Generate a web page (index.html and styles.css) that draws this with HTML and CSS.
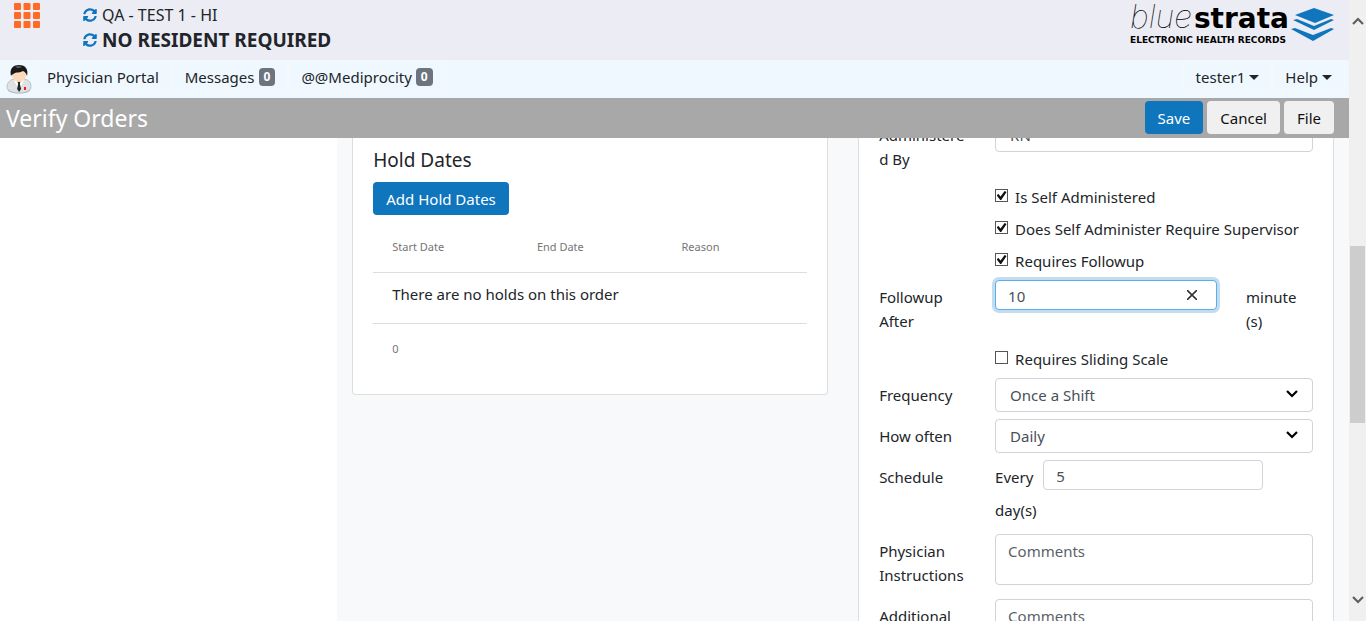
FILE: index.html
```html
<!DOCTYPE html>
<html lang="en">
<head>
<meta charset="utf-8">
<title>Verify Orders</title>
<link rel="stylesheet" href="styles.css">
</head>
<body>
<svg class="defs" aria-hidden="true">
  <symbol id="sync" viewBox="0 0 512 512"><path d="M370.7 133.3C339.5 104 298.900 88 255.800 88c-77.500.100-144.300 53.200-162.800 126.900-1.300 5.400-6.100 9.100-11.700 9.100H24.100c-7.500 0-13.200-6.800-11.800-14.200C33.900 94.900 134.800 8 256 8c66.400 0 126.800 26.100 171.300 68.700L463 41c15.100-15.100 41-4.400 41 17v134c0 13.300-10.700 24-24 24H346c-21.400 0-32.100-25.900-17-41l41.700-41.700zM32 296h134c21.400 0 32.100 25.900 17 41l-41.800 41.800c31.300 29.300 71.800 45.300 114.900 45.200 77.400-.100 144.300-53.100 162.800-126.800 1.300-5.400 6.100-9.200 11.700-9.200h57.300c7.500 0 13.200 6.800 11.800 14.200C478.100 417.100 377.200 504 256 504c-66.400 0-126.800-26.100-171.300-68.700L49 471c-15.100 15.100-41 4.400-41-17V320c0-13.300 10.700-24 24-24z"/></symbol>
  <symbol id="chevron" viewBox="0 0 12 8"><path d="M1 1l5 5 5-5" fill="none" stroke="currentColor" stroke-width="2.200"/></symbol>
</svg>
<div class="app">
  <div class="main">
    <header class="banner">
      <button class="apps" aria-label="Applications">
        <svg viewBox="0 0 26 25" fill="#ff6a26"><rect width="7" height="7" rx="1"/><rect x="9.500" width="7" height="7" rx="1"/><rect x="19" width="7" height="7" rx="1"/><rect y="9" width="7" height="7" rx="1"/><rect x="9.500" y="9" width="7" height="7" rx="1"/><rect x="19" y="9" width="7" height="7" rx="1"/><rect y="18" width="7" height="7" rx="1"/><rect x="9.500" y="18" width="7" height="7" rx="1"/><rect x="19" y="18" width="7" height="7" rx="1"/></svg>
      </button>
      <div class="context">
        <div class="facility"><svg class="sync"><use href="#sync"/></svg>QA - TEST 1 - HI</div>
        <div class="resident"><svg class="sync"><use href="#sync"/></svg>NO RESIDENT REQUIRED</div>
      </div>
      <div class="logo">
        <div class="wordmark">
          <div class="brand"><span class="thin">blue</span><span class="heavy">strata</span></div>
          <div class="tagline">ELECTRONIC HEALTH RECORDS</div>
        </div>
        <svg class="layers" viewBox="0 0 44 33" fill="#0f75bd"><path d="M23 0L43 7 24 15 4 7z"/><path d="M2 12l4-1 17 7 17-7 3 1-20 10z"/><path d="M0 21l4-1 18 7 18-7 3 1-21 12z"/></svg>
      </div>
    </header>
    <nav class="nav">
      <svg class="avatar" viewBox="0 0 26 30">
        <ellipse cx="13" cy="26" rx="11.500" ry="3.500" fill="#c3c6cb"/>
        <path d="M1 23c0-5 4-8 8-8h8c5 0 8 3 8 8 0 4-6 6-12 6S1 27 1 23z" fill="#dfe1e5" stroke="#9fa4ac" stroke-width=".6"/>
        <path d="M8 16l5 11 5-11z" fill="#fff"/><path d="M11.500 17h3l-.6 3 1.200 5-2 3-2-3 1-5z" fill="#23262b"/>
        <ellipse cx="13" cy="11" rx="7" ry="7" fill="#fbd9bb"/>
        <path d="M5 12C3 4 8 1 13 1s10 3 8 11c-1-3-2-4-4-5-3 2-6 1-8 2-1 1-3 1-4 3z" fill="#191919"/>
        <path d="M9 3c2-1 5-1 7 0-2 1-5 1-7 0z" fill="#777"/>
        <path d="M18 23h2v3h-2z" fill="#e0222c"/>
      </svg>
      <a class="nav-item" href="#">Physician Portal</a>
      <a class="nav-item" href="#">Messages <span class="badge">0</span></a>
      <a class="nav-item" href="#">@@Mediprocity <span class="badge">0</span></a>
      <button class="nav-item user">tester1<span class="caret"></span></button>
      <button class="nav-item">Help<span class="caret"></span></button>
    </nav>
    <div class="titlebar">
      <h1>Verify Orders</h1>
      <button class="btn primary">Save</button>
      <button class="btn light">Cancel</button>
      <button class="btn light">File</button>
    </div>
    <div class="content">
      <div class="side"></div>
      <div class="panels">
        <section class="card holds">
          <h2>Hold Dates</h2>
          <button class="btn primary">Add Hold Dates</button>
          <table>
            <thead><tr><th>Start Date</th><th>End Date</th><th>Reason</th></tr></thead>
            <tbody><tr><td colspan="3">There are no holds on this order</td></tr></tbody>
            <tfoot><tr><td colspan="3">0</td></tr></tfoot>
          </table>
        </section>
        <form class="card order">
          <div class="row">
            <label for="admin">Administered By</label>
            <div class="field"><div class="select"><select id="admin"><option>RN</option></select><svg><use href="#chevron"/></svg></div></div>
          </div>
          <div class="row">
            <div class="field checks">
              <label class="check"><input type="checkbox" checked>Is Self Administered</label>
              <label class="check"><input type="checkbox" checked>Does Self Administer Require Supervisor</label>
              <label class="check"><input type="checkbox" checked>Requires Followup</label>
            </div>
          </div>
          <div class="row">
            <label for="after">Followup After</label>
            <div class="field followup">
              <div class="clearable"><input class="text focused" id="after" type="text" value="10"><button type="button" aria-label="Clear"><svg viewBox="0 0 10 10"><path d="M0 0l10 10M10 0L0 10" stroke="#333" stroke-width="1.600"/></svg></button></div>
              <span class="unit">minute (s)</span>
            </div>
          </div>
          <div class="row">
            <div class="field checks"><label class="check"><input type="checkbox">Requires Sliding Scale</label></div>
          </div>
          <div class="row">
            <label for="freq">Frequency</label>
            <div class="field"><div class="select"><select id="freq"><option>Once a Shift</option></select><svg><use href="#chevron"/></svg></div></div>
          </div>
          <div class="row">
            <label for="often">How often</label>
            <div class="field"><div class="select"><select id="often"><option>Daily</option></select><svg><use href="#chevron"/></svg></div></div>
          </div>
          <div class="row">
            <label for="every">Schedule</label>
            <div class="field schedule"><span>Every</span><input class="text" id="every" type="text" value="5"><span class="days">day(s)</span></div>
          </div>
          <div class="row">
            <label for="phys">Physician Instructions</label>
            <div class="field"><textarea id="phys" placeholder="Comments"></textarea></div>
          </div>
          <div class="row">
            <label for="addl">Additional Instructions</label>
            <div class="field"><textarea id="addl" placeholder="Comments"></textarea></div>
          </div>
        </form>
      </div>
    </div>
  </div>
  <div class="scrollbar">
    <button class="up" aria-label="Scroll up"><svg><use href="#chevron"/></svg></button>
    <div class="before"></div><div class="thumb"></div><div class="after"></div>
    <button aria-label="Scroll down"><svg><use href="#chevron"/></svg></button>
  </div>
</div>
</body>
</html>
```

FILE: styles.css
```css
* { box-sizing: border-box; }
body { margin: 0; color: #212529; }
body, button, input, select, textarea { font-family: "Noto Sans", "Open Sans", sans-serif; font-size: 15px; line-height: 24px; }
button { margin: 0; padding: 0; border: 0; background: none; color: inherit; }
a { color: inherit; text-decoration: none; }
h1, h2 { margin: 0; font-weight: 400; }
.defs { display: none; }

.app { display: flex; height: 100vh; overflow: hidden; }
.main { flex: 1; min-width: 0; display: flex; flex-direction: column; }

.banner { display: flex; align-items: flex-start; flex: none; height: 60px; padding: 3px 14px 0; background: #ececf4; }
.apps { width: 26px; height: 25px; }
.apps svg { display: block; width: 26px; height: 25px; }
.context { margin-left: 43px; flex: 1; }
.facility, .resident { display: flex; align-items: center; gap: 5px; }
.facility { font-size: 16px; }
.resident { font-size: 19px; font-weight: 700; line-height: 26px; }
.sync { width: 14px; height: 14px; fill: #0f75bd; }
.logo { display: flex; align-items: flex-start; gap: 2px; color: #000; }
.brand { display: flex; align-items: baseline; justify-content: flex-end; font-size: 28px; line-height: 28px; }
.thin { padding-right: 2px; font-family: Inter, Lato, sans-serif; font-size: 32px; font-weight: 100; font-style: italic; }
.heavy { font-family: "DejaVu Sans", sans-serif; font-weight: 700; }
.tagline { margin-top: 2px; font-family: "DejaVu Sans", sans-serif; font-size: 9px; font-weight: 700; line-height: 10px; }
.layers { width: 44px; height: 33px; margin-top: 5px; }

.nav { display: flex; align-items: flex-start; flex: none; height: 38px; padding: 1px 4px 0 6px; background: #f0f8ff; }
.avatar { width: 26px; height: 30px; margin: 3px 2px 0 0; }
.nav-item { display: flex; align-items: center; gap: 4px; height: 32px; padding: 0 12px; border: 1px solid #f5f9fd; border-radius: 4px; }
.user { margin-left: auto; }
.badge { padding: 0 5px; border-radius: 4px; background: #6c757d; color: #fff; font-size: 12px; font-weight: 700; line-height: 18px; }
.caret { border: 5px solid transparent; border-top-color: #212529; border-bottom: 0; }

.titlebar { display: flex; align-items: center; flex: none; gap: 4px; height: 40px; padding: 0 15px 1px 6px; background: #a8a8a8; }
.titlebar h1 { flex: 1; color: #fff; font-size: 23px; line-height: 32px; }
.btn { height: 33px; padding: 0 13px; border-radius: 4px; }
.primary { background: #0f75bd; color: #fff; }
.light { background: #f0f0f0; color: #111; }

.content { display: flex; flex: 1; min-height: 0; overflow: hidden; }
.side { flex: 0 0 25%; background: #fff; }
.panels { flex: 1; display: flex; align-items: flex-start; gap: 30px; padding: 0 15px; background: #f8f9fb; }
.card { flex: 1 1 0; min-width: 0; padding: 0 20px; border: 1px solid #dcdddf; border-top: 0; background: #fff; }
.holds { padding-top: 10px; padding-bottom: 20px; border-radius: 0 0 4px 4px; }
.holds h2 { margin-bottom: 10px; font-size: 19px; }
table { width: 100%; margin-top: 8px; border-collapse: collapse; table-layout: fixed; }
th, td { padding: 0 19px; text-align: left; font-weight: 400; }
th { height: 49px; color: #757575; font-size: 11px; }
tbody td { height: 51px; padding-bottom: 7px; border-top: 1px solid #dcdddf; border-bottom: 1px solid #dcdddf; }
tfoot td { height: 51px; color: #757575; font-size: 11px; }

.order { margin-top: -20px; }
.row { display: flex; justify-content: flex-end; margin: 0 -15px 7px; }
.row > label { flex: 0 0 25%; padding: 5px 15px; overflow-wrap: anywhere; }
.field { flex: 0 0 75%; padding: 0 15px; }
.select { display: grid; align-items: center; }
.select select, .select svg { grid-area: 1 / 1; }
.select select { appearance: none; width: 100%; height: 34px; padding: 0 14px; border: 1px solid #ced4da; border-radius: 4px; background: #fff; color: #495057; }
.select svg { justify-self: end; width: 12px; height: 8px; margin-right: 15px; margin-bottom: 2px; color: #000; pointer-events: none; }
.checks { display: flex; flex-direction: column; gap: 8px; padding-top: 2px; }
.check { display: flex; align-items: center; gap: 7px; }
.check input { appearance: none; display: grid; place-items: center; width: 13px; height: 13px; margin: 0 0 3px; border: 1px solid #555; background: #fff; }
.check input:checked::before { content: ""; width: 10px; height: 9px; background: #111; clip-path: polygon(0 48%, 18% 34%, 40% 62%, 80% 0, 100% 12%, 46% 100%, 36% 100%); }
.text { height: 30px; min-width: 0; padding: 2px 12px 0; border: 1px solid #ced4da; border-radius: 4px; background: #fff; color: #495057; }
.followup { display: flex; gap: 29px; }
.clearable { display: grid; align-items: center; flex: 0 0 222px; height: 30px; }
.clearable input, .clearable button { grid-area: 1 / 1; }
.clearable button { justify-self: end; width: 10px; height: 10px; margin-right: 20px; }
.clearable svg { display: block; width: 10px; height: 10px; }
.text.focused { width: 100%; border-color: #56b0ef; box-shadow: 0 0 0 3px #c3dcee; outline: 0; }
.unit { flex: 1; padding-top: 5px; }
.schedule { display: flex; flex-wrap: wrap; align-items: center; gap: 8px 10px; padding-bottom: 5px; }
.schedule .text { width: 220px; }
.schedule > span { padding-top: 4px; }
.schedule .days { flex: 0 0 100%; padding: 0; }
textarea { display: block; width: 100%; height: 51px; padding: 4px 12px; border: 1px solid #ced4da; border-radius: 4px; resize: none; background: #fff; }
textarea::placeholder { color: #5a6168; opacity: 1; }

.scrollbar { display: flex; flex-direction: column; flex: 0 0 17px; background: #f0f0f0; }
.scrollbar button { display: flex; align-items: center; justify-content: center; height: 42px; color: #606060; }
.scrollbar svg { width: 12px; height: 8px; }
.up svg { transform: rotate(180deg); }
.before { flex: 204; }
.thumb { flex: 177; margin: 0 1px; background: #cdcdcd; }
.after { flex: 156; }
```
